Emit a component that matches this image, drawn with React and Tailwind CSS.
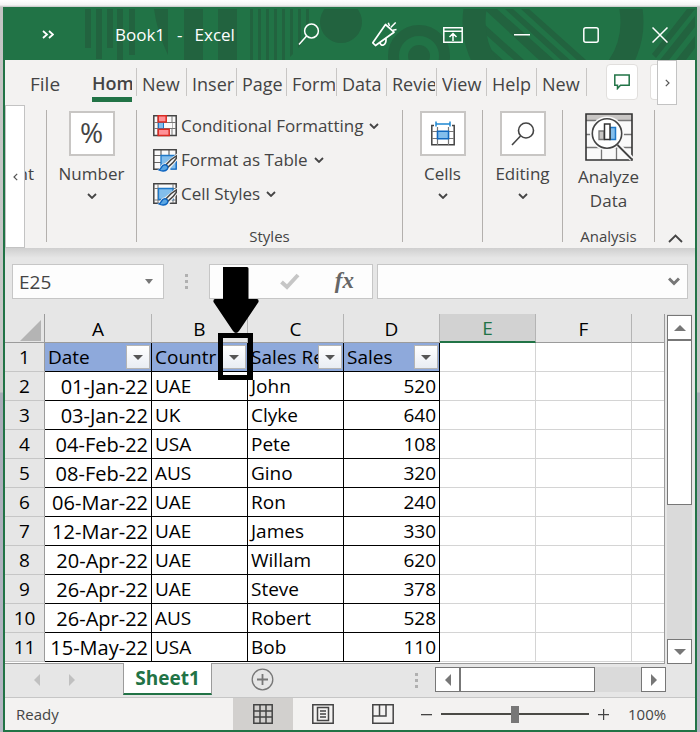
import React from "react";

const rows = [
  ["01-Jan-22", "UAE", "John", 520],
  ["03-Jan-22", "UK", "Clyke", 640],
  ["04-Feb-22", "USA", "Pete", 108],
  ["08-Feb-22", "AUS", "Gino", 320],
  ["06-Mar-22", "UAE", "Ron", 240],
  ["12-Mar-22", "UAE", "James", 330],
  ["20-Apr-22", "UAE", "Willam", 620],
  ["26-Apr-22", "UAE", "Steve", 378],
  ["26-Apr-22", "AUS", "Robert", 528],
  ["15-May-22", "USA", "Bob", 110],
];

const tabs = ["Hom", "New", "Inser", "Page", "Form", "Data", "Revie", "View", "Help", "New"];

function Chevron({ className = "" }) {
  return (
    <svg width="10" height="6" viewBox="0 0 10 6" className={className} aria-hidden="true">
      <path d="M1 1l4 4 4-4" fill="none" stroke="#444" strokeWidth="1.8" />
    </svg>
  );
}

function Triangle({ dir, color = "#777" }) {
  const d = {
    up: "M0 9L6 3l6 6z",
    down: "M0 3h12L6 9z",
    left: "M9 0v12L3 6z",
    right: "M3 0v12l6-6z",
  }[dir];
  return (
    <svg width="12" height="12" viewBox="0 0 12 12" aria-hidden="true">
      <path d={d} fill={color} />
    </svg>
  );
}

function TitlePattern() {
  return (
    <svg className="absolute left-0 top-0" width="690" height="51" viewBox="5 9 690 51" aria-hidden="true">
      <g fill="#22633f">
        <path d="M85 9h6v39h-6zM96 9h6v50h-6zM107 9h6v39h-6zM117 9h6v51h-6zM129 9h6v46h-6z" />
        <path d="M154 9h14v46Q157 32 154 9z" />
        <path d="M184 9h19v51h-19zM218 9h19v51h-19z" />
        <path d="M250 9h3v51h-3zM258 9h3v51h-3zM266 9h3v51h-3zM274 9h3v51h-3zM282 9h3v51h-3zM290 9h3v45l-3 3zM298 9h3v36l-3 3zM306 9h3v15h-3z" />
        <circle cx="341" cy="22" r="21" />
        <circle cx="419" cy="56" r="11" />
        <path d="M660 60l35-44v11l-26 33zM676 60l19-24v12l-9 12zM652 54l35-45h8l-39 49z" />
        <path d="M484 9h13l57 51h-15zM505 9h8l57 51h-9zM521 9h8l57 51h-9zM484 24l40 36h-10l-30-27zM484 43l19 17h-9l-10-9z" />
      </g>
      <circle cx="419" cy="56" r="25.5" fill="none" stroke="#22633f" strokeWidth="11" />
      <circle cx="553" cy="22" r="79" fill="none" stroke="#22633f" strokeWidth="23" />
    </svg>
  );
}

function TitleButton({ label, wide, children }) {
  return (
    <button
      aria-label={label}
      className={(wide ? "w-[81px]" : "w-[69px]") + " flex h-full shrink-0 items-center justify-center"}
    >
      {children}
    </button>
  );
}

function TitleBar() {
  return (
    <header className="relative flex h-[51px] items-center overflow-hidden text-white">
      <TitlePattern />
      <div className="relative flex h-full w-full items-center pr-px">
        <button aria-label="More quick access commands" className="flex w-[86px] justify-center">
          <svg width="12" height="9" viewBox="0 0 12 9" fill="none" stroke="#fff" strokeWidth="1.8">
            <path d="M1 1l4 3.5L1 8M7 1l4 3.5L7 8" />
          </svg>
        </button>
        <h1 className="flex-1 whitespace-nowrap pl-6 text-[17px] leading-6">
          Book1<span className="mx-3">-</span>Excel
        </h1>
        <TitleButton label="Search" wide>
          <svg width="22" height="23" viewBox="0 0 22 23" fill="none" stroke="#fff" strokeWidth="1.5">
            <circle cx="13.5" cy="8" r="6.9" />
            <path d="M8.6 13L1 21.5" />
          </svg>
        </TitleButton>
        <TitleButton label="What's new">
          <svg width="26" height="26" viewBox="0 0 26 26" fill="none" stroke="#fff" strokeWidth="1.7" strokeLinejoin="round">
            <path d="M14.500 2.500L1.800 20.800l2.700 2.700L23 10.200zM9 20.500c.500 4.500 6.500 3.500 6-4" />
            <path d="M17.300.700l1.200 3.300M19.700 5.500l5-5M21.800 8.200l3.700-.6" strokeWidth="1.500" />
          </svg>
        </TitleButton>
        <TitleButton label="Ribbon display options">
          <svg width="20" height="16" viewBox="0 0 20 16" fill="none" stroke="#fff" strokeWidth="1.5">
            <path d="M.8.8h18.400v14.400H.8zM.8 4.200h18.400M10 14V7M6.500 10L10 6.500l3.500 3.500" />
          </svg>
        </TitleButton>
        <TitleButton label="Minimize">
          <svg width="16" height="2" viewBox="0 0 16 2"><path d="M0 0h16v1.500H0z" fill="#fff" /></svg>
        </TitleButton>
        <TitleButton label="Maximize">
          <svg width="16" height="16" viewBox="0 0 16 16" fill="none" stroke="#fff" strokeWidth="1.500">
            <rect x=".8" y=".8" width="14.400" height="14.400" rx="2" />
          </svg>
        </TitleButton>
        <TitleButton label="Close">
          <svg width="16" height="16" viewBox="0 0 16 16" fill="none" stroke="#fff" strokeWidth="1.500">
            <path d="M.5.5l15 15M15.500.5l-15 15" />
          </svg>
        </TitleButton>
      </div>
    </header>
  );
}

function TabRow() {
  return (
    <nav className="flex h-[43px] items-start text-[18px] leading-7 text-[#444]">
      <button className="mt-[10px] w-[82px] shrink-0 whitespace-nowrap pl-[25px] text-left text-[19px]">File</button>
      {tabs.map((name, i) => (
        <div key={i} className="mt-2 h-7 w-[50px] shrink-0 border-r border-[#c8c6c4] pl-[5px]">
          <button
            className={
              "mt-[2px] block overflow-hidden whitespace-nowrap text-left " +
              (i === 0 ? "h-8 w-10 border-b-[5px] border-[#217346] font-semibold leading-[27px]" : "h-7 w-[43px]")
            }
          >
            {name}
          </button>
        </div>
      ))}
      <button aria-label="Comments" className="ml-[19px] mt-1 flex h-9 w-8 shrink-0 items-center justify-center rounded border border-[#e1dfdd] bg-white">
        <svg width="16" height="16" viewBox="0 0 16 16" fill="none" stroke="#217346" strokeWidth="1.500">
          <path d="M.8 1h14.400v10.200H6.500L3.500 14.500v-3.300H.8z" />
        </svg>
      </button>
      <button aria-label="Share" className="ml-3 mt-1 h-9 w-[7px] shrink-0 rounded-l border border-r-0 border-[#e1dfdd] bg-white" />
      <button aria-label="Scroll tabs right" className="flex h-[45px] w-5 shrink-0 items-center justify-center border border-[#c3c3c3] bg-white">
        <svg width="5" height="8" viewBox="0 0 5 8" fill="none" stroke="#555" strokeWidth="1.200"><path d="M.8.8L4 4 .8 7.200" /></svg>
      </button>
    </nav>
  );
}

function ConditionalIcon() {
  return (
    <svg width="24" height="22" viewBox="0 0 24 22" fill="none" aria-hidden="true">
      <path d="M.8.8h22.400v19.800H.8z" fill="#fafafa" stroke="#444" strokeWidth="1.500" />
      <path d="M5 1v19M19 1v19M1 7.500h22M1 13.500h22" stroke="#777" />
      <path d="M5.500 7.500h5v6h-5z" fill="#83beec" stroke="#1e78c8" />
      <path d="M11 8h8v5h-8z" fill="#fafafa" />
      <path d="M5.200.800h8v6.200h-8zM5.200 14.200h11v6.200h-11z" fill="#ff9197" stroke="#d92b22" strokeWidth="1.500" />
    </svg>
  );
}

function Brush() {
  return (
    <g>
      <path d="M24 4.500L11.500 14.500C7 14.500 8 19.500 4.500 20.500L7 23h8.500l2-4L24 11.500z" fill="#f3f2f1" />
      <path d="M23.500 6.800c-4 2.200-8 5.700-10.700 9.200l2.200 2.200c3.500-2.700 6.500-5.700 8.500-9z" fill="#fafafa" stroke="#444" strokeWidth="1.500" />
      <path d="M11.800 15.800c2.500 0 4 2.500 2.400 4.500-1.700 2.200-5.800 2-8.200.7 2.500-.7 2.200-5.200 5.800-5.200z" fill="#5ba6e2" stroke="#0c64c0" strokeWidth="1.400" />
    </g>
  );
}

function FormatTableIcon() {
  return (
    <svg width="24" height="23" viewBox="0 0 24 23" fill="none" aria-hidden="true">
      <path d="M.8.8h22.400v19.400H.8z" fill="#fafafa" />
      <path d="M8 6.500h16v14H8z" fill="#83beec" />
      <path d="M8 1v6M16 1v5.500M1 6.500h22M1 13.500h7" stroke="#666" strokeWidth="1.200" />
      <path d="M8 20V6.500h15" stroke="#1e78c8" strokeWidth="1.300" />
      <path d="M23.200 7V.8H.8v19.400H8" stroke="#444" strokeWidth="1.500" />
      <path d="M17.500 20.200h5.700V12" stroke="#0c64c0" strokeWidth="1.300" />
      <Brush />
    </svg>
  );
}

function CellStylesIcon() {
  return (
    <svg width="24" height="23" viewBox="0 0 24 23" fill="none" aria-hidden="true">
      <path d="M.8.8h22.400v19.400H.8z" fill="#fafafa" stroke="#444" strokeWidth="1.500" />
      <path d="M5 1v19M1 5.500h22M1 17h22M20 1v19" stroke="#777" />
      <path d="M5.500 5.500h14.500v11H5.500z" fill="#83beec" stroke="#1e78c8" strokeWidth="1.300" />
      <Brush />
    </svg>
  );
}

function CellsIcon() {
  return (
    <svg width="24" height="25" viewBox="0 0 24 25" fill="none" aria-hidden="true">
      <path d="M5 .5v5M19 .5v5M5 3h14" stroke="#1e88d2" strokeWidth="1.500" />
      <path d="M3 4.500H.8v19.200h22.400V4.500H21" stroke="#444" strokeWidth="1.500" />
      <path d="M1 10.500h22M1 17.500h22M6.500 6v18M17.500 6v18" stroke="#777" strokeWidth="1.200" />
      <path d="M6.500 10.200h11v7.500h-11z" fill="#83beec" stroke="#1068bf" strokeWidth="1.500" />
    </svg>
  );
}

function AnalyzeIcon() {
  return (
    <svg width="48" height="48" viewBox="0 0 48 48" fill="none" aria-hidden="true">
      <path d="M1 1h46v46H1z" fill="#fafafa" />
      <path d="M1 1h46v6H1z" fill="#c8c6c4" />
      <path d="M1 7.500h46M1 21.500h46M1 34.500h46M16.500 34v13M31.500 34v13" stroke="#777" strokeWidth="1.300" />
      <path d="M1 1h46v46H1z" stroke="#333" strokeWidth="1.600" />
      <circle cx="22" cy="20.500" r="17" fill="#fafafa" />
      <path d="M32 31l15 15" stroke="#fafafa" strokeWidth="5" />
      <circle cx="22" cy="20.500" r="14.700" fill="#fff" stroke="#444" strokeWidth="1.600" />
      <path d="M32.500 32L47 46.500" stroke="#444" strokeWidth="1.800" />
      <path d="M14 18h5v8.500h-5z" fill="#c8c6c4" stroke="#777" strokeWidth="1.300" />
      <path d="M25 14.500h5.500v12H25z" fill="#83beec" stroke="#1e78c8" strokeWidth="1.500" />
      <path d="M19.500 11h5.500v15.500h-5.500z" fill="#fff" stroke="#333" strokeWidth="1.500" />
    </svg>
  );
}

function BigButton({ label, width, children }) {
  return (
    <div className={width + " shrink-0 pt-2"}>
      <button className="flex w-full flex-col items-center">
        <span className="flex h-[45px] w-[46px] items-center justify-center border-2 border-[#c8c6c4] bg-white">{children}</span>
        <span className="mt-[6px] leading-6">{label}</span>
        <Chevron className="mt-[7px]" />
      </button>
    </div>
  );
}

function StyleButton({ icon, label }) {
  return (
    <button className="flex h-[34px] items-center whitespace-nowrap">
      {icon}
      <span className="ml-1 leading-6">{label}</span>
      <Chevron className="ml-[6px]" />
    </button>
  );
}

function Divider() {
  return <div className="mt-[7px] h-[132px] w-px shrink-0 bg-[#b3b0ad]" />;
}

function Ribbon() {
  return (
    <section aria-label="Home ribbon" className="flex h-[145px] text-[17px] text-[#444]">
      <button aria-label="Scroll ribbon left" className="mt-[2px] flex w-5 shrink-0 items-center justify-center border border-[#c3c3c3] bg-white">
        <svg width="5" height="8" viewBox="0 0 5 8" fill="none" stroke="#555" strokeWidth="1.200"><path d="M4.200.8L1 4l3.200 3.200" /></svg>
      </button>
      <div className="flex w-[21px] shrink-0 justify-end overflow-hidden pr-3 pt-[59px] leading-6">nt</div>
      <Divider />
      <BigButton label="Number" width="w-[89px]"><span className="pb-1 text-[28px] leading-8">%</span></BigButton>
      <Divider />
      <div className="flex flex-1 flex-col pt-[6px]">
        <div className="pl-4">
          <StyleButton icon={<ConditionalIcon />} label="Conditional Formatting" />
          <StyleButton icon={<FormatTableIcon />} label="Format as Table" />
          <StyleButton icon={<CellStylesIcon />} label="Cell Styles" />
        </div>
        <div className="mt-auto pb-[2px] text-center text-[15px] leading-5">Styles</div>
      </div>
      <Divider />
      <BigButton label="Cells" width="w-[79px]"><CellsIcon /></BigButton>
      <Divider />
      <BigButton label="Editing" width="w-[79px]">
        <svg width="24" height="24" viewBox="0 0 24 24" fill="none" stroke="#444" strokeWidth="1.600">
          <circle cx="15" cy="8.500" r="7.500" />
          <path d="M9.500 14L1 23" />
        </svg>
      </BigButton>
      <Divider />
      <div className="flex w-[91px] shrink-0 flex-col pt-[10px]">
        <button className="flex flex-col items-center leading-6">
          <AnalyzeIcon />
          <span className="mt-1">Analyze</span>
          <span>Data</span>
        </button>
        <div className="mt-auto pb-[2px] text-center text-[15px] leading-5">Analysis</div>
      </div>
      <Divider />
      <button aria-label="Collapse the ribbon" className="flex w-10 shrink-0 items-end justify-center pb-[5px]">
        <svg width="15" height="9" viewBox="0 0 15 9" fill="none" stroke="#444" strokeWidth="1.800"><path d="M1 8l6.500-6.500L14 8" /></svg>
      </button>
    </section>
  );
}

function Dots() {
  return (
    <span className="flex flex-col gap-[3px]" aria-hidden="true">
      <span className="size-[3px] bg-[#b0b0b0]" />
      <span className="size-[3px] bg-[#b0b0b0]" />
      <span className="size-[3px] bg-[#b0b0b0]" />
    </span>
  );
}

function FormulaBar() {
  return (
    <div className="flex h-[66px] items-start bg-[linear-gradient(#cfcfcf,#e6e6e6_10px)] pl-[7px] pr-[7px] pt-4 text-[#444]">
      <div className="flex h-[35px] w-[152px] shrink-0 items-center border border-[#c6c6c6] bg-[#fdfdfd] pr-[10px]">
        <input aria-label="Name box" defaultValue="E25" className="w-full min-w-0 bg-transparent pl-[6px] text-[19px] leading-6 outline-none" />
        <svg width="8" height="5" viewBox="0 0 8 5" className="shrink-0"><path d="M0 0h8L4 5z" fill="#777" /></svg>
      </div>
      <div className="flex h-[35px] w-[45px] shrink-0 items-center justify-center"><Dots /></div>
      <div className="flex h-[35px] w-[164px] shrink-0 items-center justify-end gap-[35px] border border-[#c6c6c6] bg-[#fdfdfd] pr-[18px]">
        <button aria-label="Enter">
          <svg width="20" height="17" viewBox="0 0 20 17" fill="none" stroke="#c6c6c6" strokeWidth="4"><path d="M1.500 9l5.500 5L18 2" /></svg>
        </button>
        <button aria-label="Insert function" className="pb-[2px] font-['Liberation_Serif',serif] text-[23px] font-bold italic leading-6 text-[#666]">fx</button>
      </div>
      <div className="ml-1 flex h-[35px] flex-1 items-center border border-[#c6c6c6] bg-[#fdfdfd] pr-[7px]">
        <input aria-label="Formula bar" className="w-full min-w-0 bg-transparent px-2 text-[19px] outline-none" />
        <svg width="12" height="9" viewBox="0 0 12 9" className="shrink-0" fill="none" stroke="#777" strokeWidth="3"><path d="M1 1.500l5 5 5-5" /></svg>
      </div>
    </div>
  );
}

function Callout() {
  return (
    <div className="pointer-events-none absolute -right-[6px] bottom-[-9px] z-10 h-[47px] w-[35px] border-[5px] border-black">
      <svg className="absolute -left-[10px] -top-[71px]" width="46" height="67" viewBox="0 0 46 67" aria-hidden="true">
        <path d="M10 0h24q1.500 0 1.500 1.500V32H44q2 0 1.500 3L26 64q-3 4-6 0L.5 35Q0 32 2 32h8z" fill="#000" />
      </svg>
    </div>
  );
}

function FilterHeader({ label, marked }) {
  return (
    <th scope="col" className="border-b border-r border-black bg-[#8ea9db] p-0 text-left font-normal">
      <div className="relative flex h-7 items-center">
        <span className="min-w-0 flex-1 overflow-hidden whitespace-nowrap pl-[3px] pt-px">{label}</span>
        <button aria-label={"Filter " + label} className="mr-px flex size-6 shrink-0 items-center justify-center border border-[#b4b4b4] bg-[linear-gradient(#fff,#e9edf3)]">
          <svg width="10" height="5" viewBox="0 0 10 5"><path d="M0 0h10L5 5z" fill="#555" /></svg>
        </button>
        {marked && <Callout />}
      </div>
    </th>
  );
}

function EmptyCells() {
  return (
    <>
      <td className="border-b border-r border-[#d4d4d4]" />
      <td className="border-b border-r border-[#d4d4d4]" />
      <td className="border-b border-[#d4d4d4]" />
    </>
  );
}

function Sheet() {
  const rowHead = "border-b border-r border-b-[#c6c6c6] border-r-[#9b9b9b] bg-[#e6e6e6] p-0 pt-px text-center font-normal";
  return (
    <table className="w-full table-fixed border-separate border-spacing-0 bg-white text-[19px] leading-[27px] text-black">
      <colgroup>
        <col className="w-10" />
        <col className="w-[107px]" />
        <col className="w-24" />
        <col className="w-24" />
        <col className="w-24" />
        <col className="w-24" />
        <col className="w-24" />
        <col />
      </colgroup>
      <thead>
        <tr className="h-[29px] bg-[#e6e6e6] leading-[25px]">
          <td className="border-b border-r border-[#9b9b9b] p-0">
            <svg width="21" height="21" viewBox="0 0 21 21" className="ml-[15px] mt-1"><path d="M21 0v21H0z" fill="#b4b4b4" /></svg>
          </td>
          {["A", "B", "C", "D", "E", "F"].map((c) => (
            <th
              key={c}
              scope="col"
              className={
                "border-r border-r-[#b4b4b4] p-0 pt-[2px] font-normal " +
                (c === "E" ? "border-b-2 border-b-[#217346] bg-[#d2d2d2] text-[#217346]" : "border-b border-b-[#9b9b9b]")
              }
            >
              {c}
            </th>
          ))}
          <td className="border-b border-[#9b9b9b]" />
        </tr>
      </thead>
      <tbody>
        <tr className="h-[29px]">
          <th scope="row" className={rowHead}>1</th>
          <FilterHeader label="Date" />
          <FilterHeader label="Countr" marked />
          <FilterHeader label="Sales Re" />
          <FilterHeader label="Sales" />
          <EmptyCells />
        </tr>
        {rows.map((r, i) => (
          <tr key={i} className="h-[29px]">
            <th scope="row" className={rowHead}>{i + 2}</th>
            <td className="whitespace-nowrap border-b border-r border-black p-0 pr-[3px] pt-px text-right text-[20px]">{r[0]}</td>
            <td className="border-b border-r border-black p-0 pl-[3px] pt-px">{r[1]}</td>
            <td className="border-b border-r border-black p-0 pl-[3px] pt-px">{r[2]}</td>
            <td className="border-b border-r border-black p-0 pr-[3px] pt-px text-right">{r[3]}</td>
            <EmptyCells />
          </tr>
        ))}
      </tbody>
    </table>
  );
}

const scrollBtn = "flex size-[25px] shrink-0 items-center justify-center border border-[#777] bg-white";

function SheetArea() {
  return (
    <div className="flex bg-[#e6e6e6]">
      <div className="min-w-0 flex-1 border-b border-r border-[#9b9b9b] bg-white pb-px">
        <Sheet />
      </div>
      <div className="ml-[2px] mr-[3px] flex w-[25px] shrink-0 flex-col bg-[#dadada] pt-px">
        <button aria-label="Scroll up" className={scrollBtn}><Triangle dir="up" /></button>
        <div className="h-[165px] border border-[#777] bg-white" />
        <div className="flex-1" />
        <button aria-label="Scroll down" className={scrollBtn}><Triangle dir="down" /></button>
      </div>
    </div>
  );
}

function SheetTabs() {
  return (
    <div className="flex h-[33px] items-start bg-[#e6e6e6]">
      <div className="flex h-8 w-[118px] shrink-0 items-center gap-[23px] pl-[26px]">
        <button aria-label="Previous sheet"><Triangle dir="left" color="#c0c0c0" /></button>
        <button aria-label="Next sheet"><Triangle dir="right" color="#c0c0c0" /></button>
      </div>
      <button className="-mt-px h-8 w-[89px] shrink-0 border-x border-b-2 border-x-[#9b9b9b] border-b-[#217346] bg-white text-[19px] font-bold leading-6 text-[#217346]">
        Sheet1
      </button>
      <button aria-label="New sheet" className="ml-[39px] mt-1">
        <svg width="23" height="23" viewBox="0 0 23 23" fill="none" stroke="#777" strokeWidth="1.300">
          <circle cx="11.500" cy="11.500" r="10.300" />
          <path d="M11.500 6v11M6 11.500h11" strokeWidth="1.800" />
        </svg>
      </button>
      <div className="ml-auto flex h-8 items-center pr-[17px]"><Dots /></div>
      <div className="mr-[29px] mt-[3px] flex w-[231px] shrink-0 bg-[#dadada]">
        <button aria-label="Scroll left" className={scrollBtn}><Triangle dir="left" /></button>
        <div className="h-[25px] w-[135px] border border-[#777] bg-white" />
        <div className="flex-1" />
        <button aria-label="Scroll right" className={scrollBtn}><Triangle dir="right" /></button>
      </div>
    </div>
  );
}

function StatusBar() {
  return (
    <footer className="flex h-[33px] items-center border-t border-[#c6c6c6] bg-[#f3f2f1] text-[15px] text-[#444]">
      <span className="flex-1 pl-[11px]">Ready</span>
      <button aria-label="Normal view" className="flex h-full w-[60px] items-center justify-center bg-[#d2d0ce]">
        <svg width="20" height="20" viewBox="0 0 20 20" fill="none" stroke="#444" strokeWidth="1.500">
          <path d="M.8.8h18.400v18.400H.8zM7 1v18M13 1v18M1 7h18M1 13h18" />
        </svg>
      </button>
      <button aria-label="Page layout view" className="flex h-full w-[60px] items-center justify-center">
        <svg width="22" height="20" viewBox="0 0 22 20" fill="none" stroke="#444" strokeWidth="1.500">
          <path d="M.8.8h20.400v18.400H.8zM5.500 3.500h11v13h-11zM8 7h6M8 10h6M8 13h6" />
        </svg>
      </button>
      <button aria-label="Page break preview" className="flex h-full w-[60px] items-center justify-center">
        <svg width="22" height="20" viewBox="0 0 22 20" fill="none" stroke="#444" strokeWidth="1.500">
          <path d="M.8.8h20.400v18.400H.8zM1 12h13V1M7.500 1v11" />
        </svg>
      </button>
      <button aria-label="Zoom out" className="ml-2">
        <svg width="11" height="11" viewBox="0 0 11 11"><path d="M0 5h11v1.300H0z" fill="#444" /></svg>
      </button>
      <input
        type="range"
        aria-label="Zoom"
        min="0"
        max="100"
        defaultValue="50"
        className="mx-[9px] h-[17px] w-[148px] appearance-none bg-[linear-gradient(#4a4a46,#4a4a46)] bg-[length:100%_2px] bg-center bg-no-repeat [&::-webkit-slider-thumb]:h-[17px] [&::-webkit-slider-thumb]:w-2 [&::-webkit-slider-thumb]:appearance-none [&::-webkit-slider-thumb]:bg-[#777]"
      />
      <button aria-label="Zoom in">
        <svg width="11" height="11" viewBox="0 0 11 11"><path d="M0 5h11v1.200H0zM5 0h1.200v11H5z" fill="#444" /></svg>
      </button>
      <span className="w-[86px] pl-[19px]">100%</span>
    </footer>
  );
}

export default function App() {
  return (
    <div className="bg-[linear-gradient(#fff_0px,#f4f4f4_5px,#c4c4c4_7px,#c9c9c9_392px,#a9abb8_393px,#b5b7c4)] px-[3px] pt-[7px] font-['Open_Sans','Noto_Sans',sans-serif]">
      <div className="border-2 border-[#217346] bg-[#f3f2f1]">
        <div className="bg-[#217346]"><TitleBar /></div>
        <TabRow />
        <Ribbon />
        <FormulaBar />
        <SheetArea />
        <SheetTabs />
        <StatusBar />
      </div>
    </div>
  );
}
